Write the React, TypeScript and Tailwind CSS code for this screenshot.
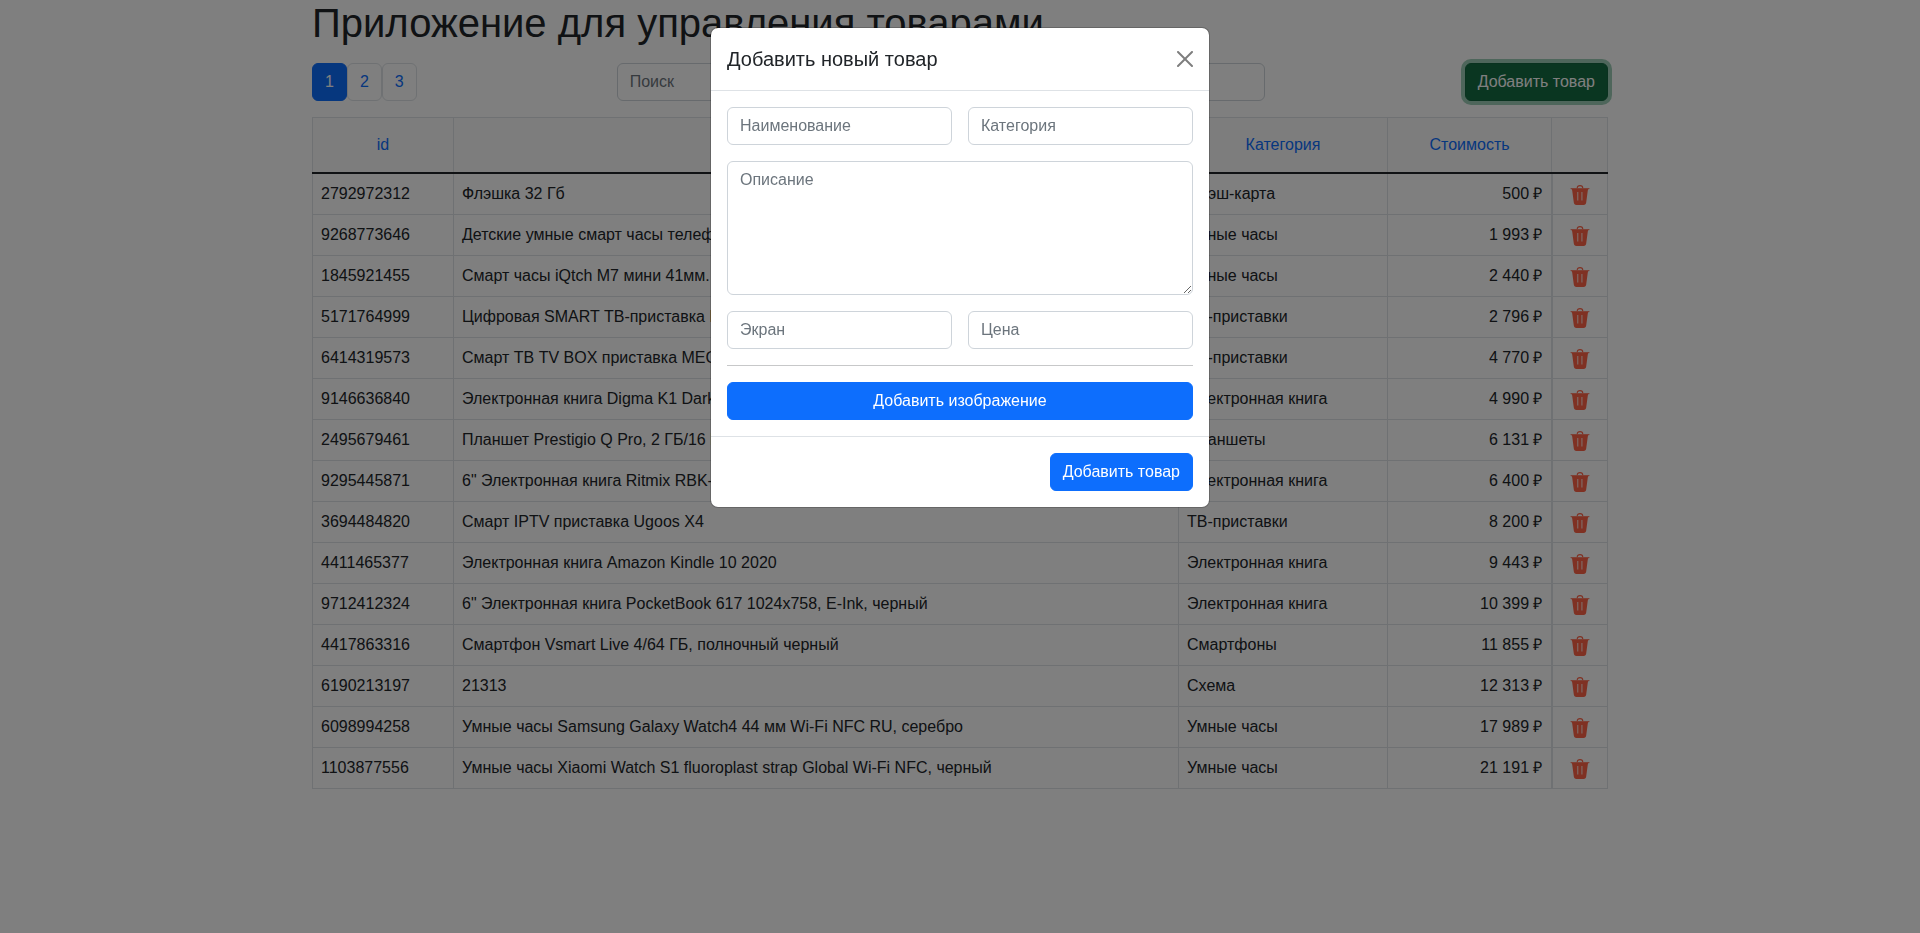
import React, { useState } from "react";

type Product = { id: string; name: string; category: string; price: string };

const products: Product[] = [
  { id: "2792972312", name: "Флэшка 32 Гб", category: "Флэш-карта", price: "500" },
  { id: "9268773646", name: "Детские умные смарт часы телефон", category: "Умные часы", price: "1 993" },
  { id: "1845921455", name: "Смарт часы iQtch M7 мини 41мм.", category: "Умные часы", price: "2 440" },
  { id: "5171764999", name: "Цифровая SMART ТВ-приставка Rombica", category: "ТВ-приставки", price: "2 796" },
  { id: "6414319573", name: "Смарт ТВ TV BOX приставка MECOOL", category: "ТВ-приставки", price: "4 770" },
  { id: "9146636840", name: "Электронная книга Digma K1 Dark Gray", category: "Электронная книга", price: "4 990" },
  { id: "2495679461", name: "Планшет Prestigio Q Pro, 2 ГБ/16 ГБ", category: "Планшеты", price: "6 131" },
  { id: "9295445871", name: "6\" Электронная книга Ritmix RBK-617", category: "Электронная книга", price: "6 400" },
  { id: "3694484820", name: "Смарт IPTV приставка Ugoos X4", category: "ТВ-приставки", price: "8 200" },
  { id: "4411465377", name: "Электронная книга Amazon Kindle 10 2020", category: "Электронная книга", price: "9 443" },
  { id: "9712412324", name: "6\" Электронная книга PocketBook 617 1024x758, E-Ink, черный", category: "Электронная книга", price: "10 399" },
  { id: "4417863316", name: "Смартфон Vsmart Live 4/64 ГБ, полночный черный", category: "Смартфоны", price: "11 855" },
  { id: "6190213197", name: "21313", category: "Схема", price: "12 313" },
  { id: "6098994258", name: "Умные часы Samsung Galaxy Watch4 44 мм Wi-Fi NFC RU, серебро", category: "Умные часы", price: "17 989" },
  { id: "1103877556", name: "Умные часы Xiaomi Watch S1 fluoroplast strap Global Wi-Fi NFC, черный", category: "Умные часы", price: "21 191" },
];

const columns = ["id", "Наименование", "Категория", "Стоимость"];

const field =
  "block w-full rounded-md border border-[#ced4da] bg-white px-3 py-1.5 text-base text-[#212529] placeholder:text-[#6c757d] placeholder:opacity-100 focus:outline-none";

const primaryButton =
  "rounded-md border border-[#0d6efd] bg-[#0d6efd] px-3 py-1.5 text-base text-white";

const headCell =
  "border-x border-b-2 border-x-[#dee2e6] border-b-[#212529] bg-[#fafafa] p-2 font-normal";

function TrashIcon() {
  return (
    <svg viewBox="0 0 20 20" className="size-5" aria-hidden="true">
      <path d="M7.2 3.2C7.2 1.4 8.2 .6 10 .6S12.8 1.4 12.8 3.2" fill="none" stroke="tomato" strokeWidth="1.1" />
      <path d="M.6 3H19.4V4.1H.6Z" fill="tomato" fillOpacity="0.8" />
      <path
        fill="tomato"
        d="M1.6 4H18.4L17.8 5.6L16.2 17.6C16 19.3 15.2 20 13.6 20H6.4C4.8 20 4 19.3 3.8 17.6L2.2 5.6Z"
      />
      <path d="M7 7H8.4V15.4H7ZM11.2 7H12.6V15.4H11.2Z" fill="white" fillOpacity="0.6" />
    </svg>
  );
}

function Pagination() {
  const [page, setPage] = useState(1);
  return (
    <nav aria-label="Страницы" className="flex">
      {[1, 2, 3].map((n) => (
        <a
          key={n}
          href={`#page-${n}`}
          aria-current={n === page ? "page" : undefined}
          onClick={() => setPage(n)}
          className={
            n === page
              ? "rounded-md border border-[#0d6efd] bg-[#0d6efd] px-3 py-1.5 text-white"
              : "rounded-md border border-[#dee2e6] bg-white px-3 py-1.5 text-[#0d6efd]"
          }
        >
          {n}
        </a>
      ))}
    </nav>
  );
}

function ProductTable() {
  return (
    <table className="w-full table-fixed border-collapse border border-[#dee2e6]">
      <colgroup>
        <col className="w-[141px]" />
        <col />
        <col className="w-[209px]" />
        <col className="w-[164px]" />
        <col className="w-[56px]" />
      </colgroup>
      <thead>
        <tr>
          {columns.map((title) => (
            <th key={title} scope="col" className={headCell}>
              <button type="button" className="border border-transparent px-3 py-1.5 text-[#0d6efd]">
                {title}
              </button>
            </th>
          ))}
          <td className={headCell} />
        </tr>
      </thead>
      <tbody>
        {products.map((p) => (
          <tr key={p.id} className="border-b border-[#dee2e6]">
            <td className="border-x border-[#dee2e6] p-2">{p.id}</td>
            <td className="truncate border-x border-[#dee2e6] p-2">{p.name}</td>
            <td className="border-x border-[#dee2e6] p-2">{p.category}</td>
            <td className="border-x border-[#dee2e6] p-2 text-right">{p.price} ₽</td>
            <td className="border-r border-l-2 border-[#dee2e6]">
              <button type="button" aria-label={`Удалить ${p.name}`} className="mx-auto block pt-0.5">
                <TrashIcon />
              </button>
            </td>
          </tr>
        ))}
      </tbody>
    </table>
  );
}

function AddProductDialog() {
  return (
    <div
      role="dialog"
      aria-modal="true"
      aria-labelledby="dialog-title"
      className="mx-auto w-full max-w-[500px] rounded-lg border border-black/20 bg-white bg-clip-padding"
    >
      <header className="flex items-center justify-between border-b border-[#dee2e6] p-4">
        <h2 id="dialog-title" className="text-xl leading-[30px]">
          Добавить новый товар
        </h2>
        <button type="button" aria-label="Закрыть" className="opacity-50">
          <svg viewBox="0 0 16 16" className="size-4" aria-hidden="true">
            <path d="M.293.293a1 1 0 0 1 1.414 0L8 6.586 14.293.293a1 1 0 1 1 1.414 1.414L9.414 8l6.293 6.293a1 1 0 0 1-1.414 1.414L8 9.414l-6.293 6.293a1 1 0 0 1-1.414-1.414L6.586 8 .293 1.707a1 1 0 0 1 0-1.414z" />
          </svg>
        </button>
      </header>
      <form id="product-form" className="grid grid-cols-2 gap-4 p-4">
        <input aria-label="Наименование" placeholder="Наименование" className={field} />
        <input aria-label="Категория" placeholder="Категория" className={field} />
        <textarea aria-label="Описание" placeholder="Описание" rows={5} className={`${field} col-span-2`} />
        <input aria-label="Экран" placeholder="Экран" className={field} />
        <input aria-label="Цена" placeholder="Цена" className={field} />
        <hr className="col-span-2 h-px border-0 bg-[#c7c8c9]" />
        <button type="button" className={`${primaryButton} col-span-2`}>
          Добавить изображение
        </button>
      </form>
      <footer className="flex justify-end border-t border-[#dee2e6] p-4">
        <button type="button" className={primaryButton}>
          Добавить товар
        </button>
      </footer>
    </div>
  );
}

export default function App() {
  return (
    <div className="min-h-screen bg-white font-['Liberation_Sans',Arial,sans-serif] text-base text-[#212529]">
      <main className="mx-auto max-w-[1320px] px-3">
        <h1 className="mb-[17px] text-[40px] leading-[46px]">Приложение для управления товарами</h1>
        <div className="mb-4 flex items-center justify-between">
          <Pagination />
          <div className="w-1/2">
            <input type="search" aria-label="Поиск" placeholder="Поиск" className={field} />
          </div>
          <button
            type="button"
            className="rounded-md border border-[#13653f] bg-[#146c43] px-3 py-1.5 text-white ring-4 ring-[#3c996e]/50"
          >
            Добавить товар
          </button>
        </div>
        <ProductTable />
      </main>
      <div className="fixed inset-0 overflow-y-auto bg-black/50 py-[27px]">
        <AddProductDialog />
      </div>
    </div>
  );
}
